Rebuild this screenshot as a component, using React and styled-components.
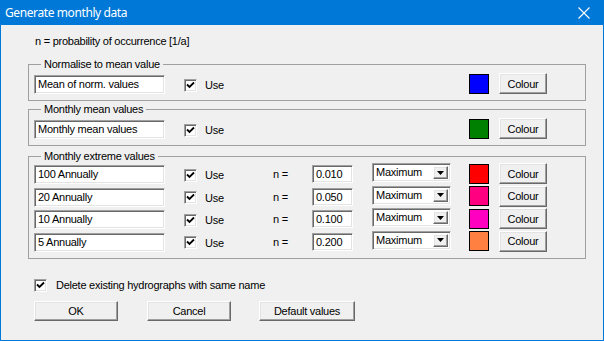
import React from "react";
import styled, { createGlobalStyle } from "styled-components";

const GlobalStyle = createGlobalStyle`
  body {
    margin: 0;
    background: #ffffff;
    font-family: "Liberation Sans", Arial, sans-serif;
  }
`;

const StyledWindow = styled.div`
  box-sizing: border-box;
  width: 604px;
  height: 341px;
  border: 1px solid #0078d7;
  background: #f0f0f0;
  display: flex;
  flex-direction: column;
  font-size: 11px;
  letter-spacing: -0.25px;
  color: #000;
`;

const TitleBar = styled.div`
  height: 25px;
  margin: -1px -1px 0;
  padding: 0 14px 0 5px;
  background: #0078d7;
  color: #fff;
  display: flex;
  align-items: center;
  justify-content: space-between;
  font-family: "Noto Sans", "Liberation Sans", sans-serif;
  font-size: 12px;
  letter-spacing: -0.4px;
  flex-shrink: 0;
  svg {
    display: block;
  }
`;

const StyledContent = styled.div`
  padding: 10px 17px 0 27px;
  display: flex;
  flex-direction: column;
`;

const InfoLine = styled.div`
  line-height: 13px;
  padding-left: 7px;
  margin-bottom: 10px;
`;

const StyledGroup = styled.fieldset`
  margin: ${(p) => p.$top || 0}px 0 0;
  padding: 0 0 7px 5px;
  border: 1px solid #a0a0a0;
  min-inline-size: 0;
  display: flex;
  flex-direction: column;
  gap: 2.5px;
  legend {
    margin-left: 7px;
    padding: 0 3px;
    line-height: 13px;
  }
`;

const StyledRow = styled.div`
  display: grid;
  grid-template-columns: 131px 19px 13px 8px 68px 39px 41px 19px 79px 18px 20px 10px 48px;
  grid-template-areas: "name . check . use n val . mode . swatch . btn";
  height: 20px;
  margin-top: ${(p) => p.$top || 0}px;
  align-items: center;
`;

const sunken = `
  border: 1px solid;
  border-color: #a0a0a0 #ffffff #ffffff #a0a0a0;
  box-shadow: inset 1px 1px 0 #696969, inset -1px -1px 0 #e3e3e3;
  background: #fff;
`;

const raised = `
  border: 1px solid;
  border-color: #ffffff #696969 #696969 #ffffff;
  box-shadow: inset -1px -1px 0 #a0a0a0, inset 1px 1px 0 #e3e3e3;
  background: #f0f0f0;
`;

const TextBox = styled.div`
  grid-area: name;
  align-self: end;
  box-sizing: border-box;
  height: 19px;
  ${sunken}
  padding: 0 3px;
  line-height: 17px;
  white-space: nowrap;
  overflow: hidden;
`;

const ValueBox = styled(TextBox)`
  grid-area: val;
  height: 18px;
  margin-bottom: 1px;
  line-height: 16px;
`;

const CheckBox = styled.span`
  box-sizing: border-box;
  width: 13px;
  height: 13px;
  ${sunken}
  display: flex;
  align-items: center;
  justify-content: center;
  svg {
    display: block;
  }
`;

const CheckCell = styled.div`
  grid-area: check;
  margin-top: 3px;
`;

const UseLabel = styled.div`
  grid-area: use;
  margin-top: 3px;
`;

const NLabel = styled.div`
  grid-area: n;
  margin-top: 1px;
`;

const Combo = styled.div`
  grid-area: mode;
  align-self: start;
  box-sizing: border-box;
  height: 19px;
  ${sunken}
  display: flex;
  align-items: stretch;
  padding: 2px 2px 2px 3px;
  span {
    flex: 1;
    line-height: 13px;
  }
`;

const ComboButton = styled.div`
  box-sizing: border-box;
  width: 15px;
  ${raised}
  display: flex;
  align-items: center;
  justify-content: center;
  svg {
    display: block;
  }
`;

const Swatch = styled.div`
  grid-area: swatch;
  box-sizing: border-box;
  width: 20px;
  height: 20px;
  border: 1px solid #000;
  background: ${(p) => p.$color};
`;

const PushButton = styled.button`
  box-sizing: border-box;
  ${raised}
  height: ${(p) => p.$h || 20}px;
  width: ${(p) => p.$w}px;
  padding: 0;
  font: inherit;
  letter-spacing: inherit;
  color: #000;
  line-height: 16px;
`;

const ColourButton = styled(PushButton)`
  grid-area: btn;
  align-self: start;
`;

const BottomCheck = styled.div`
  display: flex;
  align-items: center;
  gap: 9px;
  margin: 20px 0 0 6px;
  line-height: 13px;
`;

const ButtonBar = styled.div`
  display: flex;
  margin: 9px 0 0 6px;
  gap: 29px;
  & > :last-child {
    margin-left: -1px;
  }
`;

const Tick = () => (
  <svg width="9" height="9" viewBox="0 0 9 9">
    <path d="M1 3.5 L3.5 6 L8 1.5" fill="none" stroke="#000" strokeWidth="1.8" />
  </svg>
);

const Check = () => (
  <CheckBox>
    <Tick />
  </CheckBox>
);

const DataRow = ({ name, color, n, top }) => (
  <StyledRow $top={top}>
    <TextBox>{name}</TextBox>
    <CheckCell>
      <Check />
    </CheckCell>
    <UseLabel>Use</UseLabel>
    {n && (
      <>
        <NLabel>n =</NLabel>
        <ValueBox>{n}</ValueBox>
        <Combo>
          <span>Maximum</span>
          <ComboButton>
            <svg width="7" height="4" viewBox="0 0 7 4">
              <path d="M0 0 H7 L3.5 4 Z" fill="#000" />
            </svg>
          </ComboButton>
        </Combo>
      </>
    )}
    <Swatch $color={color} />
    <ColourButton $w={48} $h={21}>
      Colour
    </ColourButton>
  </StyledRow>
);

const extremes = [
  { name: "100 Annually", n: "0.010", color: "#ff0000" },
  { name: "20 Annually", n: "0.050", color: "#ff0080" },
  { name: "10 Annually", n: "0.100", color: "#ff00c0" },
  { name: "5 Annually", n: "0.200", color: "#ff8040" },
];

const App = () => {
  return (
    <>
      <GlobalStyle />
      <StyledWindow>
        <TitleBar>
          <span>Generate monthly data</span>
          <svg width="12" height="12" viewBox="0 0 12 12">
            <path d="M0.5 0.5 L11.5 11.5 M11.5 0.5 L0.5 11.5" stroke="#fff" strokeWidth="1.1" />
          </svg>
        </TitleBar>
        <StyledContent>
          <InfoLine>n = probability of occurrence [1/a]</InfoLine>
          <StyledGroup>
            <legend>Normalise to mean value</legend>
            <DataRow name="Mean of norm. values" color="#0000ff" top={2} />
          </StyledGroup>
          <StyledGroup $top={2}>
            <legend>Monthly mean values</legend>
            <DataRow name="Monthly mean values" color="#008000" top={2} />
          </StyledGroup>
          <StyledGroup $top={4}>
            <legend>Monthly extreme values</legend>
            {extremes.map((row) => (
              <DataRow key={row.name} {...row} />
            ))}
          </StyledGroup>
          <BottomCheck>
            <Check />
            <span>Delete existing hydrographs with same name</span>
          </BottomCheck>
          <ButtonBar>
            <PushButton $w={84}>OK</PushButton>
            <PushButton $w={84}>Cancel</PushButton>
            <PushButton $w={96}>Default values</PushButton>
          </ButtonBar>
        </StyledContent>
      </StyledWindow>
    </>
  );
};

export default App;
